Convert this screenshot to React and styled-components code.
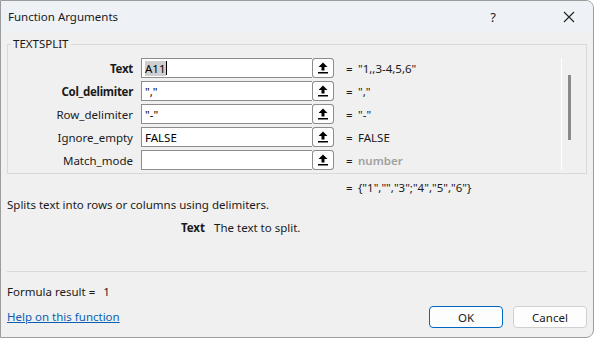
import styled, { createGlobalStyle } from "styled-components";

const GlobalStyle = createGlobalStyle`
  html, body {
    margin: 0;
    padding: 0;
    background: #ffffff;
  }
  body {
    font-family: "Noto Sans", "Segoe UI", sans-serif;
    font-size: 11.5px;
    color: #000;
  }
`;

const args = [
  { name: "Text", bold: true, value: "A11", selected: true, result: "\"1,,3-4,5,6\"" },
  { name: "Col_delimiter", bold: true, value: "\",\"", result: "\",\"" },
  { name: "Row_delimiter", value: "\"-\"", result: "\"-\"" },
  { name: "Ignore_empty", value: "FALSE", result: "FALSE" },
  { name: "Match_mode", value: "", result: "number", muted: true },
];

const RefIcon = () => (
  <svg width="10" height="12" viewBox="0 0 10 12">
    <path d="M5 0.5 L9.5 5 H6.5 V8.5 H3.5 V5 H0.5 Z" fill="#000" />
    <rect x="0" y="10" width="10" height="1.5" fill="#000" />
  </svg>
);

const App = () => {
  return (
    <>
      <GlobalStyle />
      <Window>
        {/* Title bar */}
        <TitleBar>
          <Title>Function Arguments</Title>
          <TitleButtons>
            <TitleButton>?</TitleButton>
            <TitleButton>
              <svg width="12" height="12" viewBox="0 0 12 12">
                <path d="M1 1 L11 11 M11 1 L1 11" stroke="#222" strokeWidth="1.1" />
              </svg>
            </TitleButton>
          </TitleButtons>
        </TitleBar>

        <Body>
          {/* Arguments group */}
          <GroupBox>
            <Legend>TEXTSPLIT</Legend>
            <GroupInner>
              <ArgList>
                {args.map((arg) => (
                  <ArgRow key={arg.name}>
                    <ArgLabel $bold={arg.bold}>{arg.name}</ArgLabel>
                    <InputGroup>
                      <Field>
                        {arg.selected ? (
                          <>
                            <Selected>{arg.value}</Selected>
                            <Caret />
                          </>
                        ) : (
                          arg.value
                        )}
                      </Field>
                      <RefButton>
                        <RefIcon />
                      </RefButton>
                    </InputGroup>
                    <Equals>=</Equals>
                    <ArgValue $muted={arg.muted}>{arg.result}</ArgValue>
                  </ArgRow>
                ))}
              </ArgList>
              <ScrollTrack>
                <ScrollThumb />
              </ScrollTrack>
            </GroupInner>
          </GroupBox>

          <ResultLine>
            <Equals>=</Equals>
            <span>{"{\"1\",\"\",\"3\";\"4\",\"5\",\"6\"}"}</span>
          </ResultLine>

          <Description>Splits text into rows or columns using delimiters.</Description>

          <ArgHelp>
            <ArgHelpName>Text</ArgHelpName>
            <span>The text to split.</span>
          </ArgHelp>

          <Separator />

          <FormulaResult>
            Formula result =<ResultNumber>1</ResultNumber>
          </FormulaResult>

          <Footer>
            <HelpLink href="#">Help on this function</HelpLink>
            <Buttons>
              <DialogButton $primary>OK</DialogButton>
              <DialogButton>Cancel</DialogButton>
            </Buttons>
          </Footer>
        </Body>
      </Window>
    </>
  );
};

const Window = styled.div`
  box-sizing: border-box;
  width: 594px;
  height: 338px;
  display: flex;
  flex-direction: column;
  border: 1px solid #9c9c9c;
  border-radius: 0 8px 8px 0;
  background: #f0f0f0;
  overflow: hidden;
`;

const TitleBar = styled.div`
  height: 31px;
  flex: none;
  display: flex;
  align-items: center;
  justify-content: space-between;
  padding-left: 7px;
  background: #eef2f7;
`;

const Title = styled.div`
  font-size: 11.5px;
  color: #1a1a1a;
`;

const TitleButtons = styled.div`
  display: flex;
  align-items: center;
  gap: 30px;
  height: 100%;
  padding-right: 1px;
`;

const TitleButton = styled.div`
  width: 46px;
  height: 100%;
  display: flex;
  align-items: center;
  justify-content: center;
  font-size: 13px;
  color: #222;
`;

const Body = styled.div`
  flex: 1;
  display: flex;
  flex-direction: column;
  padding: 0 6px;
`;

const GroupBox = styled.fieldset`
  margin: 4px 0 0;
  padding: 0 0 3px 0;
  border: 1px solid #d9d9d9;
  min-width: 0;
`;

const Legend = styled.legend`
  margin-left: 3px;
  padding: 0 2px;
  font-size: 11.5px;
  line-height: 16px;
  color: #1a1a1a;
`;

const GroupInner = styled.div`
  display: flex;
  margin-top: 6px;
`;

const ArgList = styled.div`
  flex: 1;
  display: flex;
  flex-direction: column;
  gap: 3px;
`;

const ArgRow = styled.div`
  display: grid;
  grid-template-columns: 133px 193px 24px 1fr;
  align-items: center;
  height: 20px;
`;

const ArgLabel = styled.div`
  text-align: right;
  padding-right: 8px;
  font-weight: ${(p) => (p.$bold ? 700 : 400)};
  letter-spacing: ${(p) => (p.$bold ? "-0.3px" : "0")};
  color: #1a1a1a;
  white-space: nowrap;
`;

const InputGroup = styled.div`
  display: flex;
  height: 20px;
`;

const Field = styled.div`
  box-sizing: border-box;
  flex: 1;
  height: 20px;
  display: flex;
  align-items: center;
  padding-left: 3px;
  background: #fff;
  border: 1px solid #8c8c8c;
  border-right: none;
  white-space: nowrap;
`;

const Selected = styled.span`
  background: #cfcfcf;
  line-height: 15px;
`;

const Caret = styled.span`
  display: inline-block;
  width: 1px;
  height: 14px;
  background: #000;
`;

const RefButton = styled.div`
  box-sizing: border-box;
  width: 22px;
  height: 20px;
  display: flex;
  align-items: center;
  justify-content: center;
  background: #fdfdfd;
  border: 1px solid #c6c6c6;
  border-radius: 3px;
  box-shadow: inset 0 0 0 1px #fff;
  outline: 1px solid #8c8c8c;
  outline-offset: -1px;
  clip-path: inset(0);
`;

const Equals = styled.div`
  padding-left: 12px;
  color: #1a1a1a;
  width: 12px;
  flex: none;
`;

const ArgValue = styled.div`
  color: ${(p) => (p.$muted ? "#a0a0a0" : "#1a1a1a")};
  font-weight: ${(p) => (p.$muted ? 600 : 400)};
  white-space: nowrap;
`;

const ScrollTrack = styled.div`
  width: 24px;
  display: flex;
  flex-direction: column;
  border-left: 1px solid #ffffff;
  padding-top: 17px;
`;

const ScrollThumb = styled.div`
  margin-left: 6px;
  width: 3px;
  height: 65px;
  background: #8a8a8a;
`;

const ResultLine = styled.div`
  display: flex;
  padding-left: 327px;
  margin-top: 6px;
  line-height: 16px;
  color: #1a1a1a;
`;

const Description = styled.div`
  margin-top: 1px;
  line-height: 16px;
  color: #1a1a1a;
`;

const ArgHelp = styled.div`
  display: grid;
  grid-template-columns: 198px 1fr;
  column-gap: 9px;
  margin-top: 7px;
  line-height: 16px;
  color: #1a1a1a;
`;

const ArgHelpName = styled.span`
  text-align: right;
  font-weight: 700;
`;

const Separator = styled.div`
  margin-top: 35px;
  height: 1px;
  background: #d9d9d9;
`;

const FormulaResult = styled.div`
  margin-top: 12px;
  line-height: 16px;
  color: #1a1a1a;
`;

const ResultNumber = styled.span`
  margin-left: 8px;
`;

const Footer = styled.div`
  display: flex;
  align-items: center;
  justify-content: space-between;
  margin-top: 6px;
`;

const HelpLink = styled.a`
  color: #0a5fb4;
  text-decoration: underline;
  line-height: 16px;
`;

const Buttons = styled.div`
  display: flex;
  gap: 10px;
`;

const DialogButton = styled.button`
  box-sizing: border-box;
  width: 74px;
  height: 22px;
  font-family: inherit;
  font-size: 11.5px;
  color: #1a1a1a;
  background: #fdfdfd;
  border: 1px solid ${(p) => (p.$primary ? "#0067c0" : "#d0d0d0")};
  border-radius: 4px;
  padding: 0;
`;

export default App;
